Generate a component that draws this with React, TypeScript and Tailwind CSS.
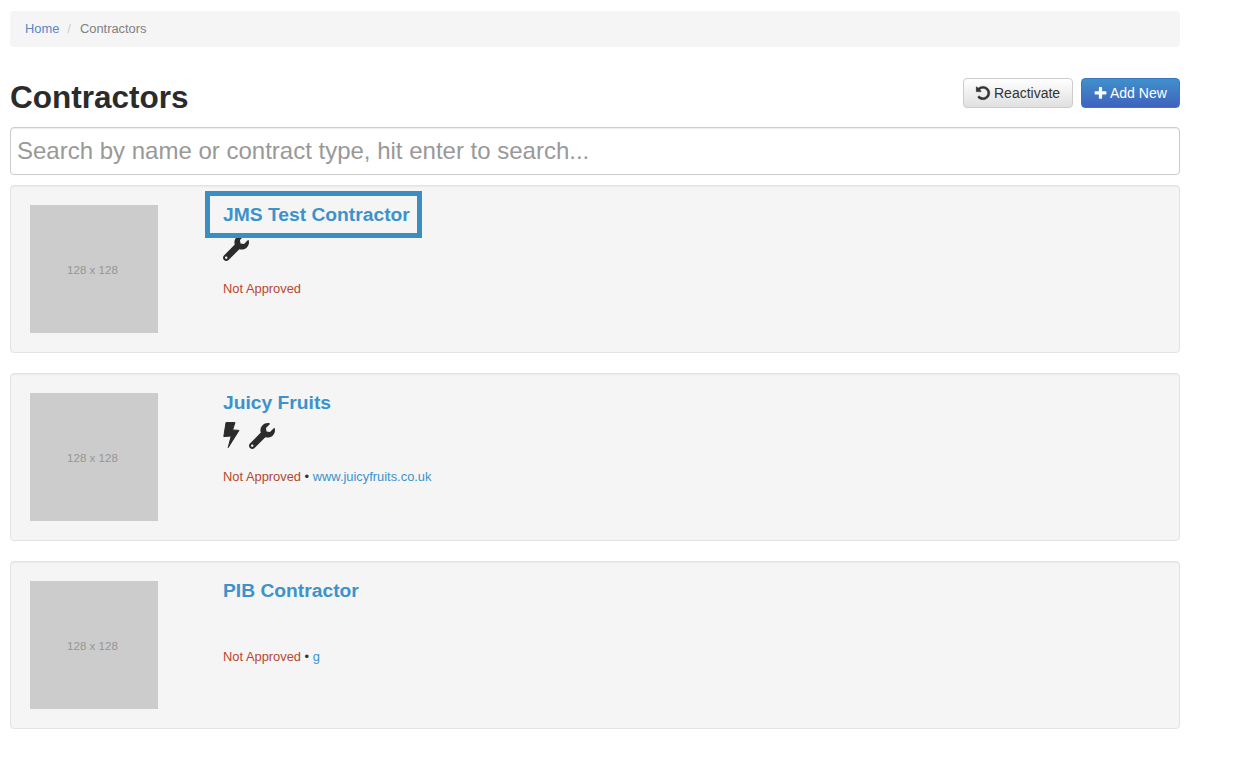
const FONT = "font-['Liberation_Sans',Arial,sans-serif]";

const Wrench = () => (
  <svg viewBox="0 0 512 512" className="mt-[2px] h-[26px] w-[26px] shrink-0 fill-[#2b2b2b]">
    <path d="M507.73 109.1c-2.24-9.03-13.54-12.09-20.12-5.51l-74.36 74.36-67.88-11.31-11.31-67.88 74.36-74.36c6.62-6.62 3.43-17.9-5.66-20.16-47.38-11.74-99.55.91-136.58 37.93-39.64 39.64-50.55 97.1-34.05 147.2L18.74 402.76c-24.99 24.99-24.99 65.51 0 90.5 24.99 24.99 65.51 24.99 90.5 0l213.21-213.21c50.12 16.71 107.47 5.68 147.37-34.22 37.07-37.07 49.7-89.32 37.91-136.73zM64 472c-13.25 0-24-10.75-24-24 0-13.26 10.75-24 24-24s24 10.74 24 24c0 13.25-10.75 24-24 24z" />
  </svg>
);

const Bolt = () => (
  <svg viewBox="0 0 17 26" className="mt-[1px] h-[26px] w-[17px] shrink-0 fill-[#2b2b2b] stroke-[#2b2b2b] stroke-[1]">
    <polygon strokeLinejoin="round" points="3,0.6 12,0.6 9.6,7.9 16,8.4 5.2,25.6 8.2,14 0.8,14.6" />
  </svg>
);

const Undo = () => (
  <svg viewBox="0 0 1792 1792" className="h-[16px] w-[16px] shrink-0 fill-[#333333] stroke-[#333333] stroke-[30]">
    <path d="M1664 896q0 156-61 298t-164 245-245 164-298 61q-172 0-327-72.500t-264-204.500q-7-10-6.500-22.500t8.500-20.500l137-138q10-9 25-9 16 2 23 12 73 95 179 147t225 52q104 0 198.500-40.500t163.500-109.500 109.500-163.500 40.500-198.500-40.500-198.500-109.500-163.500-163.500-109.500-198.500-40.500q-98 0-188 35.500t-160 101.500l137 138q31 30 14 69-17 40-59 40h-448q-26 0-45-19t-19-45v-448q0-42 40-59 39-17 69 14l130 129q107-101 244.500-156.500t284.500-55.500q156 0 298 61t245 164 164 245 61 298z" />
  </svg>
);

const Plus = () => (
  <svg viewBox="0 0 1792 1792" className="h-[15px] w-[15px] shrink-0 fill-white">
    <path d="M1600 736v192q0 40-28 68t-68 28h-416v416q0 40-28 68t-68 28h-192q-40 0-68-28t-28-68v-416h-416q-40 0-68-28t-28-68v-192q0-40 28-68t68-28h416v-416q0-40 28-68t68-28h192q40 0 68 28t28 68v416h416q40 0 68 28t28 68z" />
  </svg>
);

type Item = {
  name: string;
  icons: ("bolt" | "wrench")[];
  site?: string;
  focused?: boolean;
};

const items: Item[] = [
  { name: "JMS Test Contractor", icons: ["wrench"], focused: true },
  { name: "Juicy Fruits", icons: ["bolt", "wrench"], site: "www.juicyfruits.co.uk" },
  { name: "PIB Contractor", icons: [], site: "g" },
];

function Card({ item }: { item: Item }) {
  return (
    <div className="flex h-[168px] rounded-[4px] border border-[#e3e3e3] bg-[#f5f5f5] p-[19px] shadow-[inset_0_1px_1px_rgba(0,0,0,0.05)]">
      <div className="flex h-[128px] w-[128px] shrink-0 items-center justify-center bg-[#cccccc] pr-[3px] pt-[1px] text-[11.6px] text-[#969696]">
        128 x 128
      </div>
      <div className="ml-[52px] flex flex-col items-start">
        <a
          href="#"
          className={
            "relative z-10 -mt-[9px] flex h-[37px] items-center pl-[13px] pr-[7px] pt-[2px] text-[19.25px] font-bold text-[#3c92ca] " +
            (item.focused ? "outline-[5px] outline-[#3c8dc2]" : "")
          }
        >
          {item.name}
        </a>
        <div
          className={
            "ml-[13px] flex items-start gap-[9px] " + (item.icons.length ? "mb-[16px] h-[31px]" : "mb-[16px] h-[23px]")
          }
        >
          {item.icons.map((icon, i) => (icon === "bolt" ? <Bolt key={i} /> : <Wrench key={i} />))}
        </div>
        <p className="ml-[13px] text-[12.88px] leading-[17px] text-[#333333]">
          <span className="text-[#b5482f]">Not Approved</span>
          {item.site && (
            <>
              {" • "}
              <a href="#" className="text-[#3c92ca]">
                {item.site}
              </a>
            </>
          )}
        </p>
      </div>
    </div>
  );
}

export default function App() {
  return (
    <div className={`${FONT} min-h-[759px] bg-white pl-[10px] pt-[11px]`}>
      <div className="w-[1170px]">
        <nav className="mb-[31px] flex h-[36px] items-center rounded-[4px] bg-[#f5f5f5] px-[15px] text-[12.88px]">
          <a href="#" className="text-[#5488c9]">
            Home
          </a>
          <span className="pl-[8px] pr-[9px] text-[#cccccc]">/</span>
          <span className="text-[#808080]">Contractors</span>
        </nav>

        <div className="flex h-[49px] items-start justify-between">
          <h1 className="text-[31.5px] font-bold leading-[38px] text-[#2b2b2b]">Contractors</h1>
          <div className="flex gap-[8px]">
            <button className="flex h-[30px] w-[110px] items-center gap-[3px] rounded-[4px] border border-[#cccccc] bg-gradient-to-b from-white to-[#e0e0e0] pl-[11px] text-[14px] text-[#333333]">
              <Undo />
              Reactivate
            </button>
            <button className="flex h-[30px] w-[99px] items-center gap-[2px] rounded-[4px] border border-[#3b78c0] bg-gradient-to-b from-[#3f90c9] to-[#3f62c0] pl-[11px] text-[14px] text-white">
              <Plus />
              Add New
            </button>
          </div>
        </div>

        <input
          placeholder="Search by name or contract type, hit enter to search..."
          className="mb-[10px] block h-[48px] w-full rounded-[4px] border border-[#cccccc] bg-white px-[6px] text-[24px] text-[#555555] shadow-[inset_0_1px_1px_rgba(0,0,0,0.075)] outline-none placeholder:text-[#999999]"
        />

        <div className="flex flex-col gap-[20px]">
          {items.map((item) => (
            <Card key={item.name} item={item} />
          ))}
        </div>
      </div>
    </div>
  );
}
